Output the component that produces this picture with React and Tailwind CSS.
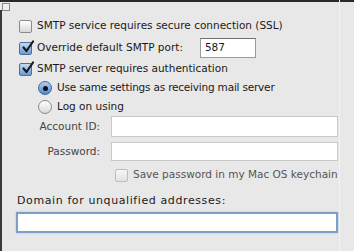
import React from 'react'

function Check({ checked, dim }) {
  let look = 'border-[#8a8a8a] bg-gradient-to-b from-white to-[#d8d8d8]'
  if (checked) look = 'border-[#4a6f9c] bg-gradient-to-b from-[#c4daf2] to-[#6a9ad6]'
  if (dim) look = 'border-[#bcbcbc] bg-gradient-to-b from-[#f6f6f6] to-[#e2e2e2]'
  return (
    <span className={`relative inline-block w-[13px] h-[13px] shrink-0 rounded-[2px] border ${look}`}>
      {checked && (
        <svg viewBox="0 0 14 14" className="absolute left-[1px] top-[-3px] w-[14px] h-[14px]">
          <path d="M2.5 7.5 L5.5 11 L12 1.5" fill="none" stroke="#1b1b1b" strokeWidth="2.2" strokeLinecap="round" strokeLinejoin="round" />
        </svg>
      )}
    </span>
  )
}

function Radio({ on }) {
  const look = on
    ? 'border-[#3d6799] bg-gradient-to-b from-[#b3d0f2] to-[#4e88d4]'
    : 'border-[#8a8a8a] bg-gradient-to-b from-white to-[#d8d8d8]'
  return (
    <span className={`relative inline-flex items-center justify-center w-[14px] h-[14px] shrink-0 rounded-full border ${look}`}>
      {on && <span className="w-[5px] h-[5px] rounded-full bg-[#111]" />}
    </span>
  )
}

export default function App() {
  return (
    <div className="w-[354px] h-[251px] bg-[#e8e8e8] overflow-hidden text-[10.5px] text-[#1a1a1a] relative whitespace-nowrap" style={{ fontFamily: '"DejaVu Sans", sans-serif' }}>
      {/* window frame edges */}
      <div className="absolute left-0 top-0 w-full h-[2px] bg-[#2a2a2a]" />
      <div className="absolute left-0 top-[10px] w-[2px] h-full bg-[#3a3a3a]" />
      <div className="absolute left-[2px] top-[3px] w-[8px] h-[8px] border border-[#888] bg-[#eee]" />
      <div className="absolute left-[339px] top-0 w-[1px] h-full bg-[#f2f2f2]" />

      <div className="flex flex-col pt-[19px] pl-[19px]">
        <div className="flex items-center gap-[5px] h-[14px]">
          <Check />
          <span>SMTP service requires secure connection (SSL)</span>
        </div>
        <div className="flex items-center gap-[5px] h-[20px] mt-[5px]">
          <Check checked />
          <span>Override default SMTP port:</span>
          <div className="ml-[12px] w-[56px] h-[20px] bg-white border border-[#9a9a9a] border-t-[#707070] pl-[4px] flex items-center">587</div>
        </div>
        <div className="flex items-center gap-[5px] h-[14px] mt-[4px]">
          <Check checked />
          <span>SMTP server requires authentication</span>
        </div>
        <div className="flex items-center gap-[5px] h-[14px] mt-[5px] pl-[19px]">
          <Radio on />
          <span className="tracking-[-0.2px]">Use same settings as receiving mail server</span>
        </div>
        <div className="flex items-center gap-[5px] h-[14px] mt-[5px] pl-[19px]">
          <Radio />
          <span>Log on using</span>
        </div>
        <div className="flex items-center h-[21px] mt-[2px] text-[#444]">
          <span className="w-[81px] text-right">Account ID:</span>
          <div className="ml-[11px] w-[227px] h-[21px] bg-white border border-[#c8c8c8]" />
        </div>
        <div className="flex items-center h-[19px] mt-[5px] text-[#444]">
          <span className="w-[81px] text-right">Password:</span>
          <div className="ml-[11px] w-[227px] h-[19px] bg-white border border-[#c8c8c8]" />
        </div>
        <div className="flex items-center gap-[5px] h-[14px] mt-[7px] pl-[96px] text-[#555]">
          <Check dim />
          <span>Save password in my Mac OS keychain</span>
        </div>
        <div className="h-[14px] mt-[12px] -ml-[2px] flex items-center text-[11px] tracking-[0.6px]">Domain for unqualified addresses:</div>
        <div className="mt-[4px] -ml-[3px] w-[322px] h-[21px] bg-white border-2 border-[#7f9ec7] shadow-[0_0_2px_#a9c2e4]" />
      </div>
    </div>
  )
}
